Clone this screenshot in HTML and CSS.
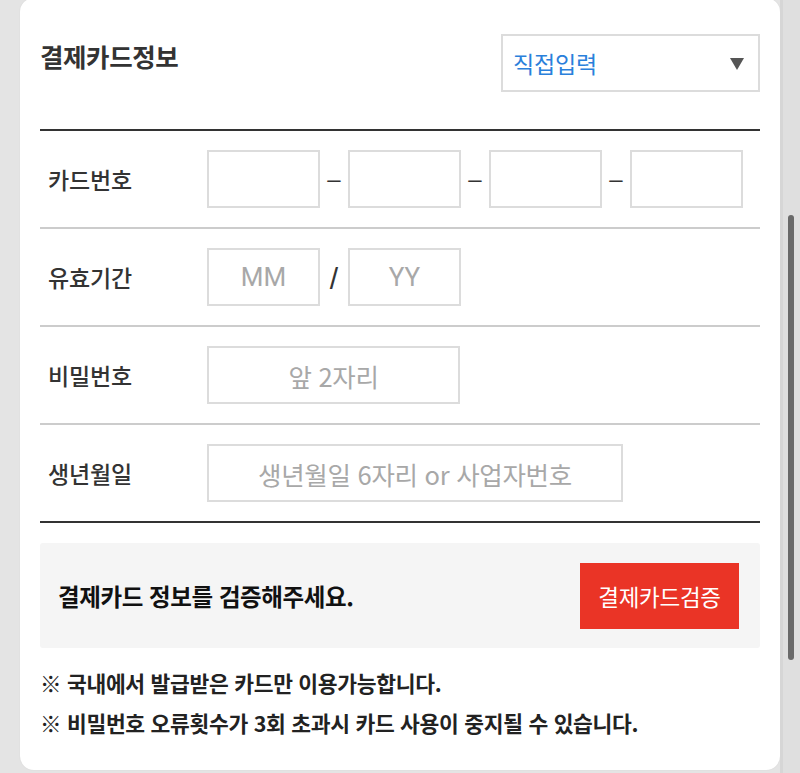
FILE: index.html
```html
<!DOCTYPE html>
<html lang="ko">
<head>
<meta charset="utf-8">
<title>결제카드정보</title>
<link rel="stylesheet" href="styles.css">
</head>
<body>
<div class="page">
  <div class="gutter"></div>
  <div class="card">
    <div class="header">
      <h2 class="title">결제카드정보</h2>
      <div class="select">
        <span class="select-text">직접입력</span>
        <span class="select-arrow"></span>
      </div>
    </div>
    <div class="form">
      <div class="row">
        <div class="label">카드번호</div>
        <div class="fields">
          <div class="box w-sm"></div>
          <span class="dash">–</span>
          <div class="box w-sm"></div>
          <span class="dash">–</span>
          <div class="box w-sm"></div>
          <span class="dash">–</span>
          <div class="box w-sm"></div>
        </div>
      </div>
      <div class="row">
        <div class="label">유효기간</div>
        <div class="fields">
          <div class="box w-sm ph ph-en">MM</div>
          <span class="slash">/</span>
          <div class="box w-sm ph ph-en">YY</div>
        </div>
      </div>
      <div class="row">
        <div class="label">비밀번호</div>
        <div class="fields">
          <div class="box w-md ph">앞 2자리</div>
        </div>
      </div>
      <div class="row row-last">
        <div class="label">생년월일</div>
        <div class="fields">
          <div class="box w-lg ph">생년월일 6자리 or 사업자번호</div>
        </div>
      </div>
    </div>
    <div class="verify">
      <p class="verify-text">결제카드 정보를 검증해주세요.</p>
      <div class="verify-btn">결제카드검증</div>
    </div>
    <ul class="notes">
      <li>※ 국내에서 발급받은 카드만 이용가능합니다.</li>
      <li>※ 비밀번호 오류횟수가 3회 초과시 카드 사용이 중지될 수 있습니다.</li>
    </ul>
  </div>
  <div class="scrollbar"><div class="thumb"></div></div>
</div>
</body>
</html>
```
FILE: styles.css
```css
* { box-sizing: border-box; }
html, body { margin: 0; padding: 0; }
body {
  background: #e4e4e4;
  font-family: "Noto Sans CJK KR", "Noto Sans", sans-serif;
  color: #333;
}
.page {
  display: flex;
  height: 773px;
  overflow: hidden;
}
.gutter { width: 20px; flex: none; }
.card {
  width: 760px;
  flex: none;
  height: 772px;
  margin-top: -2px;
  background: #fff;
  border-radius: 14px;
  padding: 0 20px;
  box-shadow: 0 0 2px rgba(0,0,0,0.06);
}
.header {
  display: flex;
  justify-content: space-between;
  align-items: flex-start;
  height: 133px;
  border-bottom: 2px solid #333;
}
.title {
  margin: 38px 0 0 0;
  font-size: 25.5px;
  font-weight: 700;
  line-height: 40px;
  color: #333;
  letter-spacing: -0.4px;
}
.select {
  margin-top: 36px;
  width: 259px;
  height: 58px;
  border: 2px solid #dcdcdc;
  display: flex;
  align-items: center;
  justify-content: space-between;
  padding: 0 14px 0 10px;
}
.select-text {
  color: #2a80db;
  font-size: 23px;
  letter-spacing: -0.2px;
}
.select-arrow {
  width: 0;
  height: 0;
  border-left: 7px solid transparent;
  border-right: 7px solid transparent;
  border-top: 12px solid #555;
  margin-top: 2px;
}
.row {
  display: flex;
  align-items: center;
  height: 98px;
  border-bottom: 2px solid #cccccc;
}
.row-last { border-bottom-color: #333; }
.label {
  width: 167px;
  flex: none;
  padding-left: 8px;
  font-size: 23px;
  font-weight: 500;
  color: #333;
  letter-spacing: -0.2px;
}
.fields {
  display: flex;
  align-items: center;
}
.box {
  height: 58px;
  border: 2px solid #dcdcdc;
  background: #fff;
}
.w-sm { width: 113px; }
.w-md { width: 253px; }
.w-lg { width: 416px; }
.ph {
  display: flex;
  align-items: center;
  justify-content: center;
  color: #a8a8a8;
  font-size: 25.5px;
  letter-spacing: -0.3px;
}
.ph-en { font-family: "Roboto", "Noto Sans", sans-serif; font-size: 26px; letter-spacing: 0; }
.dash {
  width: 28px;
  text-align: center;
  font-size: 24px;
  color: #333;
  font-family: "Liberation Sans", sans-serif;
}
.slash {
  width: 28px;
  text-align: center;
  font-size: 30px;
  font-weight: 400;
  color: #333;
  font-family: "Liberation Sans", sans-serif;
  padding-top: 4px;
}
.verify {
  margin-top: 20px;
  height: 105px;
  background: #f5f5f5;
  border-radius: 3px;
  display: flex;
  align-items: center;
  justify-content: space-between;
  padding: 0 21px 0 18px;
}
.verify-text {
  margin: 0;
  font-size: 23.5px;
  font-weight: 700;
  color: #111;
  letter-spacing: -0.4px;
}
.verify-btn {
  width: 159px;
  height: 66px;
  background: #ea3426;
  color: #fff;
  font-size: 22.5px;
  display: flex;
  align-items: center;
  justify-content: center;
  letter-spacing: -0.3px;
}
.notes {
  list-style: none;
  margin: 15px 0 0 0;
  padding: 0;
}
.notes li {
  font-size: 21.5px;
  font-weight: 700;
  line-height: 40px;
  color: #222;
  letter-spacing: -0.3px;
}
.scrollbar {
  width: 20px;
  flex: none;
  border-left: 3px solid #d6d6d6;
  background: #dfdfdf;
  padding-left: 5px;
}
.thumb {
  margin-top: 215px;
  width: 6px;
  height: 445px;
  border-radius: 3px;
  background: #6a6a6a;
}
```
